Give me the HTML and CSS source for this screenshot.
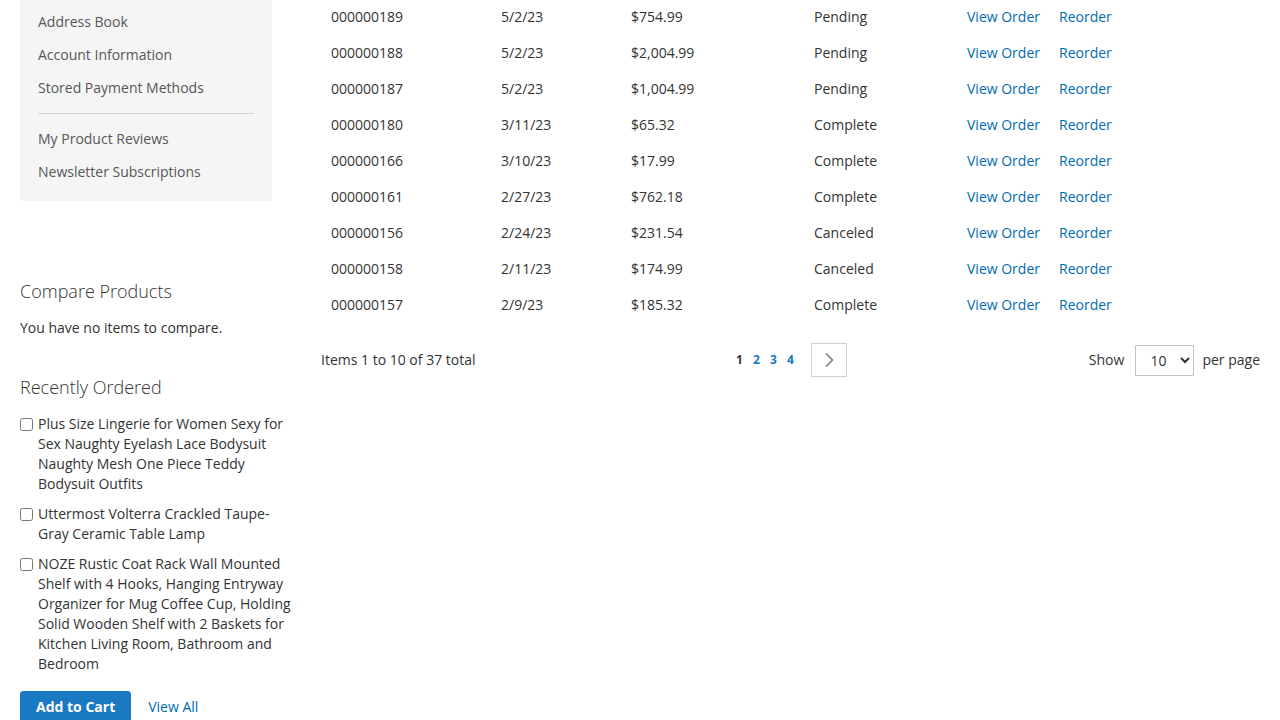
FILE: index.html
```html
<!DOCTYPE html>
<html lang="en">
<head>
<meta charset="utf-8">
<title>My Orders</title>
<link rel="stylesheet" href="styles.css">
</head>
<body>
<div class="page">
  <aside class="sidebar">
    <nav class="account-nav">
      <a class="nav-item" href="#">Address Book</a>
      <a class="nav-item" href="#">Account Information</a>
      <a class="nav-item" href="#">Stored Payment Methods</a>
      <div class="nav-divider"></div>
      <a class="nav-item" href="#">My Product Reviews</a>
      <a class="nav-item" href="#">Newsletter Subscriptions</a>
    </nav>

    <section class="block compare">
      <h2 class="block-title">Compare Products</h2>
      <p class="block-text">You have no items to compare.</p>
    </section>

    <section class="block recent">
      <h2 class="block-title">Recently Ordered</h2>
      <ol class="recent-list">
        <li class="recent-item"><input type="checkbox" class="recent-check"><span class="recent-name">Plus Size Lingerie for Women Sexy for Sex Naughty Eyelash Lace Bodysuit Naughty Mesh One Piece Teddy Bodysuit Outfits</span></li>
        <li class="recent-item"><input type="checkbox" class="recent-check"><span class="recent-name">Uttermost Volterra Crackled Taupe-Gray Ceramic Table Lamp</span></li>
        <li class="recent-item"><input type="checkbox" class="recent-check"><span class="recent-name">NOZE Rustic Coat Rack Wall Mounted Shelf with 4 Hooks, Hanging Entryway Organizer for Mug Coffee Cup, Holding Solid Wooden Shelf with 2 Baskets for Kitchen Living Room, Bathroom and Bedroom</span></li>
      </ol>
      <div class="recent-actions">
        <button class="btn-primary" type="button">Add to Cart</button>
        <a class="link" href="#">View All</a>
      </div>
    </section>
  </aside>

  <main class="main">
    <table class="orders">
      <colgroup>
        <col class="c-id"><col class="c-date"><col class="c-total"><col class="c-status"><col class="c-actions">
      </colgroup>
      <tbody>
        <tr><td>000000189</td><td>5/2/23</td><td>$754.99</td><td>Pending</td><td><a class="link" href="#">View Order</a><a class="link action" href="#">Reorder</a></td></tr>
        <tr><td>000000188</td><td>5/2/23</td><td>$2,004.99</td><td>Pending</td><td><a class="link" href="#">View Order</a><a class="link action" href="#">Reorder</a></td></tr>
        <tr><td>000000187</td><td>5/2/23</td><td>$1,004.99</td><td>Pending</td><td><a class="link" href="#">View Order</a><a class="link action" href="#">Reorder</a></td></tr>
        <tr><td>000000180</td><td>3/11/23</td><td>$65.32</td><td>Complete</td><td><a class="link" href="#">View Order</a><a class="link action" href="#">Reorder</a></td></tr>
        <tr><td>000000166</td><td>3/10/23</td><td>$17.99</td><td>Complete</td><td><a class="link" href="#">View Order</a><a class="link action" href="#">Reorder</a></td></tr>
        <tr><td>000000161</td><td>2/27/23</td><td>$762.18</td><td>Complete</td><td><a class="link" href="#">View Order</a><a class="link action" href="#">Reorder</a></td></tr>
        <tr><td>000000156</td><td>2/24/23</td><td>$231.54</td><td>Canceled</td><td><a class="link" href="#">View Order</a><a class="link action" href="#">Reorder</a></td></tr>
        <tr><td>000000158</td><td>2/11/23</td><td>$174.99</td><td>Canceled</td><td><a class="link" href="#">View Order</a><a class="link action" href="#">Reorder</a></td></tr>
        <tr><td>000000157</td><td>2/9/23</td><td>$185.32</td><td>Complete</td><td><a class="link" href="#">View Order</a><a class="link action" href="#">Reorder</a></td></tr>
      </tbody>
    </table>

    <div class="toolbar">
      <div class="amount">Items 1 to 10 of 37 total</div>
      <div class="pages">
        <strong class="page-item current">1</strong>
        <a class="page-item" href="#">2</a>
        <a class="page-item" href="#">3</a>
        <a class="page-item" href="#">4</a>
        <a class="page-next" href="#" aria-label="Next">
          <svg width="12" height="16" viewBox="0 0 12 16"><polyline points="3,1.5 9.5,8 3,14.5" fill="none" stroke="#7d7d7d" stroke-width="1.6"/></svg>
        </a>
      </div>
      <div class="limiter">
        <span>Show</span>
        <select class="limiter-select">
          <option selected>10</option>
          <option>20</option>
          <option>50</option>
        </select>
        <span>per page</span>
      </div>
    </div>
  </main>
</div>
</body>
</html>
```

FILE: styles.css
```css
* { box-sizing: border-box; }

html, body {
  margin: 0;
  padding: 0;
  background: #fff;
}

body {
  font-family: "Open Sans", "Liberation Sans", sans-serif;
  font-size: 14px;
  line-height: 20px;
  color: #333;
}

.page {
  display: flex;
  align-items: flex-start;
  padding: 0 20px;
}

.sidebar {
  width: 274px;
  flex: none;
}

.account-nav {
  width: 252px;
  background: #f5f5f5;
  padding: 5px 0 13px;
}

.nav-item {
  display: block;
  height: 33px;
  line-height: 33px;
  padding-left: 18px;
  color: #575757;
  text-decoration: none;
}

.nav-divider {
  height: 1px;
  background: #d1d1d1;
  margin: 9px 18px 8px 18px;
}

.block-title {
  margin: 0;
  font-size: 18px;
  line-height: 22px;
  font-weight: 300;
  color: #333;
}

.compare {
  margin-top: 79px;
}

.block-text {
  margin: 16px 0 0;
}

.recent {
  margin-top: 38px;
}

.recent-list {
  list-style: none;
  margin: 16px 0 0;
  padding: 0;
  display: flex;
  flex-direction: column;
  gap: 10px;
}

.recent-item {
  display: flex;
  align-items: flex-start;
}

.recent-check {
  width: 13px;
  height: 13px;
  margin: 4px 5px 0 0;
  flex: none;
}

.recent-name {
  flex: 1;
}

.recent-actions {
  display: flex;
  align-items: center;
  gap: 17px;
  margin-top: 17px;
}

.btn-primary {
  font-family: inherit;
  font-size: 14px;
  font-weight: 700;
  line-height: 16px;
  color: #fff;
  background: #1979c3;
  border: 1px solid #1979c3;
  border-radius: 3px;
  padding: 7px 15px;
}

.link {
  color: #006bb4;
  text-decoration: none;
}

.main {
  flex: 1;
  margin-left: 27px;
}

.orders {
  width: 100%;
  border-collapse: collapse;
  table-layout: fixed;
}

.c-id { width: 170px; }
.c-date { width: 130px; }
.c-total { width: 183px; }
.c-status { width: 153px; }

.orders td {
  padding: 8px 10px;
  line-height: 20px;
  vertical-align: top;
  white-space: nowrap;
}

.orders tr:first-child td {
  padding-top: 7px;
}

.action {
  margin-left: 19px;
}

.toolbar {
  display: flex;
  align-items: center;
  margin-top: 20px;
  height: 34px;
}

.amount {
  flex: 1 1 0;
}

.pages {
  display: flex;
  align-items: center;
  margin-right: 3px;
}

.page-item {
  width: 17px;
  text-align: center;
  font-size: 12px;
  font-weight: 700;
  color: #1979c3;
  text-decoration: none;
}

.page-item.current {
  color: #333;
}

.page-next {
  display: flex;
  align-items: center;
  justify-content: center;
  width: 36px;
  height: 34px;
  margin-left: 12px;
  border: 1px solid #d1d1d1;
  background: #fff;
}

.limiter {
  flex: 1 1 0;
  display: flex;
  align-items: center;
  justify-content: flex-end;
}

.limiter-select {
  font-family: inherit;
  font-size: 14px;
  color: #333;
  width: 59px;
  height: 31px;
  margin: 0 8px 0 11px;
  padding: 0 5px 0 10px;
  border: 1px solid #c2c2c2;
  border-radius: 1px;
  background: #fff;
}
```
